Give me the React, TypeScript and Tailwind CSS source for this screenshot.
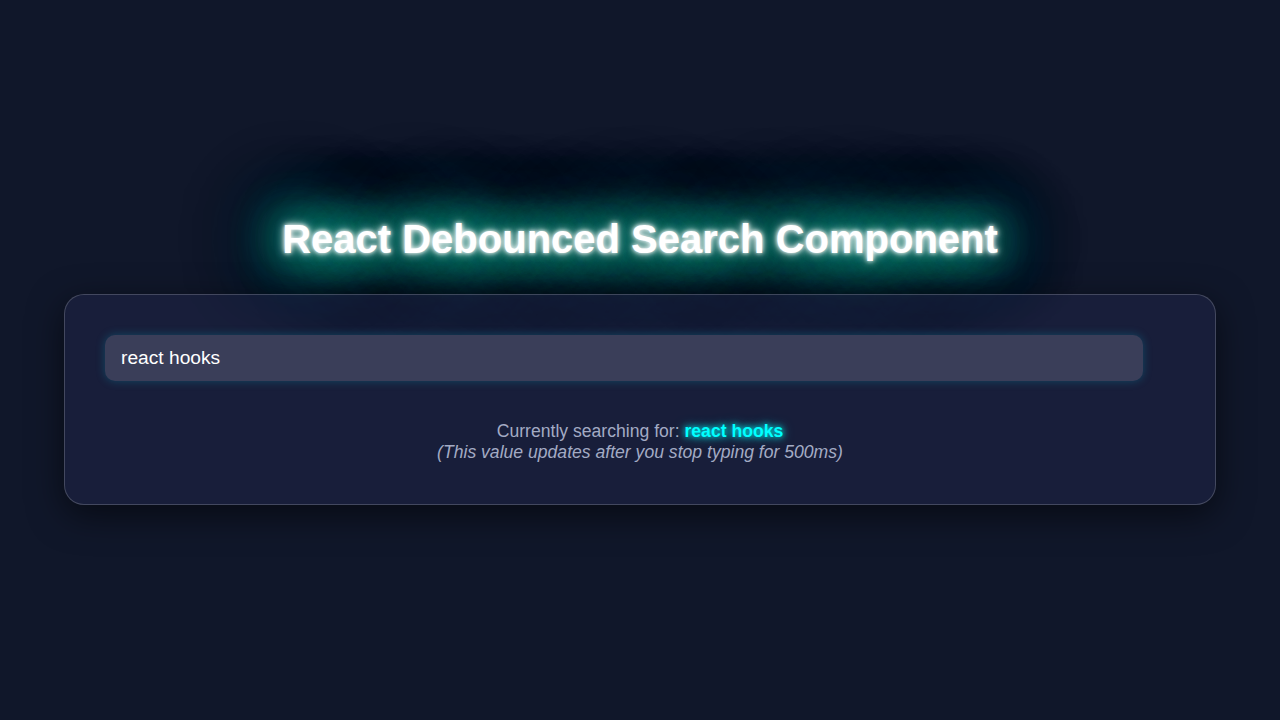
import { useEffect, useState } from 'react'

// Waits `delay` ms after the last change before passing the value on.
function useDebounce<T>(value: T, delay: number) {
  const [debounced, setDebounced] = useState(value)

  useEffect(() => {
    const id = setTimeout(() => setDebounced(value), delay)
    return () => clearTimeout(id)
  }, [value, delay])

  return debounced
}

export default function App() {
  const [query, setQuery] = useState('react hooks')
  const debouncedQuery = useDebounce(query, 500)

  return (
    <div className="min-h-screen w-full bg-[#10172a] flex flex-col items-center justify-center font-['Liberation_Sans',Arial,sans-serif]">
      <h1 className="text-[40px] leading-[46px] font-bold text-white mb-8 [text-shadow:0_0_4px_#fff,0_0_10px_#fff,0_0_40px_#1abc9c,0_0_50px_#1abc9c,0_0_60px_#1abc9c,0_0_70px_#179f8a,0_0_80px_#13907c,0_0_90px_#0e6d62,0_0_110px_#06182c]">
        React Debounced Search Component
      </h1>

      <div className="w-[1152px] rounded-[20px] border border-[#ffffff30] bg-[rgba(32,37,74,0.5)] px-10 pt-10 pb-[41px] shadow-[0_10px_35px_rgba(0,0,0,0.55)]">
        <input
          type="text"
          value={query}
          onChange={(e) => setQuery(e.target.value)}
          className="block w-[1038px] h-[46px] rounded-[10px] bg-[#3a3e59] px-4 text-[19.2px] text-white outline-none shadow-[0_0_10px_rgba(0,200,230,0.25)]"
        />

        <div className="mt-10 text-center text-[17.6px] leading-[21px] text-[#a3abc4]">
          <p>
            Currently searching for:{' '}
            <strong className="font-bold text-[#00ffff] [text-shadow:0_0_6px_#00ffff,0_0_12px_rgba(0,255,255,0.6)]">
              {debouncedQuery}
            </strong>
          </p>
          <p className="italic">(This value updates after you stop typing for 500ms)</p>
        </div>
      </div>
    </div>
  )
}
